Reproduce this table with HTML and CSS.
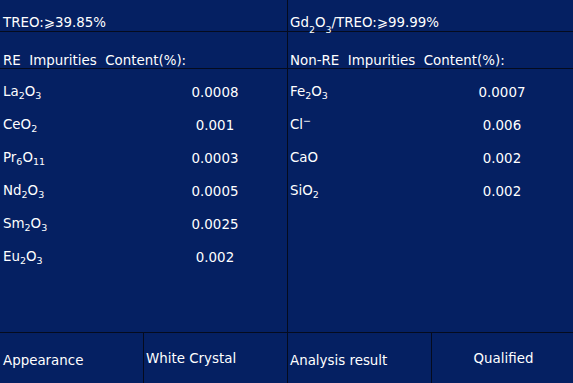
FILE: index.html
```html
<!DOCTYPE html>
<html>
<head>
<meta charset="utf-8">
<link rel="stylesheet" href="styles.css">
</head>
<body>
<div class="sheet">
  <div class="cell head left">TREO:⩾39.85%</div>
  <div class="cell head">Gd<sub>2</sub>O<sub>3</sub>/TREO:⩾99.99%</div>
  <div class="cell title left">RE&nbsp; Impurities&nbsp; Content(%):</div>
  <div class="cell title">Non-RE&nbsp; Impurities&nbsp; Content(%):</div>
  <div class="cell list left">
    <div class="item"><span class="name">La<sub>2</sub>O<sub>3</sub></span><span class="val">0.0008</span></div>
    <div class="item"><span class="name">CeO<sub>2</sub></span><span class="val">0.001</span></div>
    <div class="item"><span class="name">Pr<sub>6</sub>O<sub>11</sub></span><span class="val">0.0003</span></div>
    <div class="item"><span class="name">Nd<sub>2</sub>O<sub>3</sub></span><span class="val">0.0005</span></div>
    <div class="item"><span class="name">Sm<sub>2</sub>O<sub>3</sub></span><span class="val">0.0025</span></div>
    <div class="item"><span class="name">Eu<sub>2</sub>O<sub>3</sub></span><span class="val">0.002</span></div>
  </div>
  <div class="cell list">
    <div class="item"><span class="name">Fe<sub>2</sub>O<sub>3</sub></span><span class="val">0.0007</span></div>
    <div class="item"><span class="name">Cl<sup>−</sup></span><span class="val">0.006</span></div>
    <div class="item"><span class="name">CaO</span><span class="val">0.002</span></div>
    <div class="item"><span class="name">SiO<sub>2</sub></span><span class="val">0.002</span></div>
  </div>
  <div class="cell foot left">
    <div class="fk">Appearance</div>
    <div class="fv">White Crystal</div>
  </div>
  <div class="cell foot">
    <div class="fk">Analysis result</div>
    <div class="fv center">Qualified</div>
  </div>
</div>
</body>
</html>
```

FILE: styles.css
```css
html, body {
  margin: 0;
  padding: 0;
  background: #052062;
}
body {
  width: 573px;
  height: 383px;
  overflow: hidden;
  font-family: "DejaVu Sans", Tahoma, sans-serif;
  font-size: 13.4px;
  color: #ffffff;
}
.sheet {
  display: grid;
  grid-template-columns: 288px 285px;
  grid-template-rows: 32px 37px 264px 50px;
  width: 573px;
  height: 383px;
}
.cell {
  box-sizing: border-box;
  border-bottom: 1px solid #050b1e;
  padding-left: 2px;
}
.cell.left {
  border-right: 1px solid #050b1e;
  padding-left: 3px;
}
.head {
  display: flex;
  align-items: flex-end;
  padding-bottom: 1px;
}
.title {
  display: flex;
  align-items: flex-end;
  padding-bottom: 0;
}
sub {
  font-size: 9.5px;
  vertical-align: -3px;
  line-height: 0;
}
sup {
  font-size: 9.5px;
  vertical-align: 5px;
  line-height: 0;
}
.list {
  display: flex;
  flex-direction: column;
  padding-top: 15px;
}
.item {
  display: grid;
  grid-template-columns: 141px 1fr;
  height: 33px;
}
.list.left .item {
  grid-template-columns: 140px 144px;
}
.val {
  text-align: center;
  padding-top: 1px;
}
.foot {
  display: grid;
  grid-template-columns: 144px 1fr;
  border-bottom: none;
  padding-left: 0;
}
.foot.left {
  grid-template-columns: 144px 1fr;
  padding-left: 0;
}
.fk {
  border-right: 1px solid #050b1e;
  display: flex;
  align-items: center;
  padding-left: 2px;
  padding-top: 4px;
}
.foot.left .fk {
  padding-left: 3px;
}
.fv {
  display: flex;
  align-items: center;
  padding-left: 2px;
}
.fv.center {
  justify-content: center;
}
```
